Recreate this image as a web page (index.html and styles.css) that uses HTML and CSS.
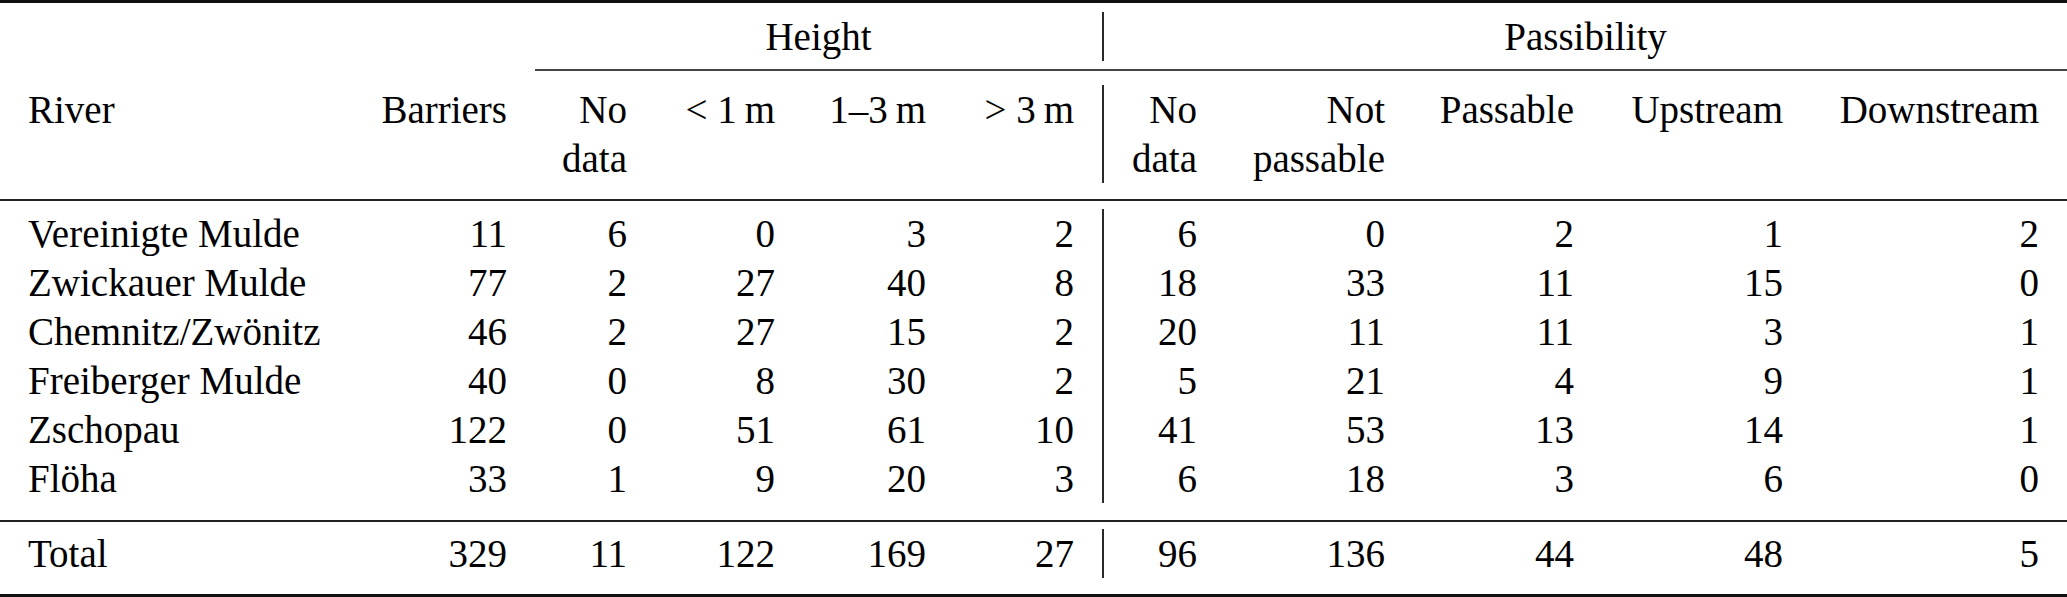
FILE: index.html
```html
<!DOCTYPE html>
<html lang="en">
<head>
    <meta charset="UTF-8">
    <title>Barriers in the Mulde catchment</title>
    <link rel="stylesheet" href="styles.css">
</head>
<body>
    <table class="barriers">
        <colgroup>
            <col class="c-river">
            <col class="c-barriers">
            <col class="c-h-nodata">
            <col class="c-h-lt1">
            <col class="c-h-13">
            <col class="c-h-gt3">
            <col class="c-p-nodata">
            <col class="c-p-not">
            <col class="c-p-pass">
            <col class="c-p-up">
            <col class="c-p-down">
        </colgroup>
        <thead>
            <tr class="gap g-top"><td colspan="11"></td></tr>
            <tr class="group">
                <th colspan="2"></th>
                <th colspan="4" class="vr">Height</th>
                <th colspan="5">Passibility</th>
            </tr>
            <tr class="gap g-cmid"><td colspan="2"></td><td colspan="9" class="cmid"></td></tr>
            <tr class="gap g-under"><td colspan="11"></td></tr>
            <tr class="cols">
                <th class="name">River</th>
                <th class="count">Barriers</th>
                <th>No<br>data</th>
                <th>&lt; 1&thinsp;m</th>
                <th>1–3&thinsp;m</th>
                <th class="vr">&gt; 3&thinsp;m</th>
                <th>No<br>data</th>
                <th>Not<br>passable</th>
                <th>Passable</th>
                <th>Upstream</th>
                <th class="last">Downstream</th>
            </tr>
            <tr class="gap g-mid"><td colspan="11"></td></tr>
        </thead>
        <tbody>
            <tr class="gap g-after"><td colspan="11"></td></tr>
            <tr>
                <td class="name">Vereinigte Mulde</td>
                <td class="count">11</td><td>6</td><td>0</td><td>3</td><td class="vr">2</td>
                <td>6</td><td>0</td><td>2</td><td>1</td><td class="last">2</td>
            </tr>
            <tr>
                <td class="name">Zwickauer Mulde</td>
                <td class="count">77</td><td>2</td><td>27</td><td>40</td><td class="vr">8</td>
                <td>18</td><td>33</td><td>11</td><td>15</td><td class="last">0</td>
            </tr>
            <tr>
                <td class="name">Chemnitz/Zwönitz</td>
                <td class="count">46</td><td>2</td><td>27</td><td>15</td><td class="vr">2</td>
                <td>20</td><td>11</td><td>11</td><td>3</td><td class="last">1</td>
            </tr>
            <tr>
                <td class="name">Freiberger Mulde</td>
                <td class="count">40</td><td>0</td><td>8</td><td>30</td><td class="vr">2</td>
                <td>5</td><td>21</td><td>4</td><td>9</td><td class="last">1</td>
            </tr>
            <tr>
                <td class="name">Zschopau</td>
                <td class="count">122</td><td>0</td><td>51</td><td>61</td><td class="vr">10</td>
                <td>41</td><td>53</td><td>13</td><td>14</td><td class="last">1</td>
            </tr>
            <tr>
                <td class="name">Flöha</td>
                <td class="count">33</td><td>1</td><td>9</td><td>20</td><td class="vr">3</td>
                <td>6</td><td>18</td><td>3</td><td>6</td><td class="last">0</td>
            </tr>
            <tr class="gap g-mid2"><td colspan="11"></td></tr>
            <tr class="gap g-after2"><td colspan="11"></td></tr>
            <tr class="total">
                <td class="name">Total</td>
                <td class="count">329</td><td>11</td><td>122</td><td>169</td><td class="vr">27</td>
                <td>96</td><td>136</td><td>44</td><td>48</td><td class="last">5</td>
            </tr>
            <tr class="gap g-end"><td colspan="11"></td></tr>
        </tbody>
    </table>
</body>
</html>
```

FILE: styles.css
```css
body {
    margin: 0;
    background: #fff;
    color: #000;
    font-family: "Liberation Serif", "Times New Roman", serif;
}

.barriers {
    width: 2067px;
    table-layout: fixed;
    border-collapse: separate;
    border-spacing: 0;
    border-top: 3px solid #111;
    border-bottom: 3px solid #111;
    font-size: 39px;
}

/* column widths, right edge of each = right edge of its numbers */
.c-river    { width: 381px; }
.c-barriers { width: 154px; }
.c-h-nodata { width: 92px; }
.c-h-lt1    { width: 148px; }
.c-h-13     { width: 151px; }
.c-h-gt3    { width: 178px; }
.c-p-nodata { width: 93px; }
.c-p-not    { width: 188px; }
.c-p-pass   { width: 189px; }
.c-p-up     { width: 209px; }
.c-p-down   { width: 284px; }

.barriers th,
.barriers td {
    padding: 0;
    font-weight: normal;
    text-align: right;
    vertical-align: top;
    white-space: nowrap;
    line-height: 49px;
}

.barriers .name {
    text-align: left;
    padding-left: 28px;
}

/* the Height rule starts a bit right of the Barriers numbers */
.barriers .count {
    padding-right: 28px;
}

.barriers .last {
    padding-right: 28px;
}

.barriers .vr {
    padding-right: 28px;
    border-right: 2px solid #2a2a2a;
}

.group th {
    text-align: center;
}

.group th.vr {
    padding-right: 0;
}

/* spacer rows: booktabs-like padding around the rules */
.gap td {
    box-sizing: border-box;
    line-height: 0;
    font-size: 0;
}

.g-top td    { height: 9px; }
.g-cmid td   { height: 10px; }
.g-cmid .cmid { border-bottom: 2px solid #444; }
.g-under td  { height: 14px; }
.g-mid td    { height: 18px; border-bottom: 2px solid #222; }
.g-after td  { height: 8px; }
.g-mid2 td   { height: 19px; border-bottom: 2px solid #222; }
.g-after2 td { height: 7px; }
.g-end td    { height: 16px; }
```
